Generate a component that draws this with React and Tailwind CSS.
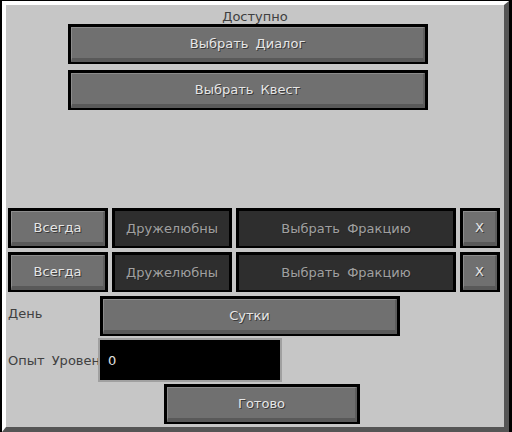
import React from "react";

const font = { fontFamily: '"DejaVu Sans", "Noto Sans", sans-serif' };

function Btn({ className = "", children, dark = false }) {
  if (dark) {
    return (
      <div className={`h-[40px] border-[3px] border-b-[2px] border-black bg-[#2e2e2e] flex items-center justify-center ${className}`}>
        <span className="text-[13px] leading-[14px] pt-[1px] text-[#a0a0a0] [text-shadow:1px_1px_0_#262626] whitespace-nowrap">
          {children}
        </span>
      </div>
    );
  }
  return (
    <div className={`h-[40px] border-[3px] border-b-[2px] border-black ${className}`}>
      <div className="h-full border-t border-l border-[#8c8c8c] border-b-[4px] border-r-[2px] border-b-[#595959] border-r-[#5e5e5e] bg-[#707070] flex items-center justify-center">
        <span className="text-[13px] leading-[14px] pt-[2px] text-[#e6e6e6] [text-shadow:1px_1px_0_#3a3a3a] whitespace-nowrap">
          {children}
        </span>
      </div>
    </div>
  );
}

export default function App() {
  return (
    <div className="w-[512px] h-[432px] overflow-hidden bg-black pl-[2px] pt-[1px] pr-[3px] [word-spacing:3px]" style={font}>
      <div className="h-[431px] border-l-4 border-t-4 border-white border-r-[5px] border-b-[5px] border-r-[#555555] border-b-[#555555] bg-[#c6c6c6] flex flex-col">
        <div className="h-[19px] pt-[5px] text-center text-[13px] leading-[14px] text-[#404040]">Доступно</div>
        <Btn className="ml-[62px] w-[360px]">Выбрать Диалог</Btn>
        <Btn className="ml-[62px] w-[360px] mt-[6px]">Выбрать Квест</Btn>

        <div className="mt-[98px] ml-[2px] flex gap-[4px]">
          <Btn className="w-[100px]">Всегда</Btn>
          <Btn dark className="w-[120px]">Дружелюбны</Btn>
          <Btn dark className="w-[220px]">Выбрать Фракцию</Btn>
          <Btn className="w-[40px]">X</Btn>
        </div>
        <div className="mt-[4px] ml-[2px] flex gap-[4px]">
          <Btn className="w-[100px]">Всегда</Btn>
          <Btn dark className="w-[120px]">Дружелюбны</Btn>
          <Btn dark className="w-[220px]">Выбрать Фракцию</Btn>
          <Btn className="w-[40px]">X</Btn>
        </div>

        <div className="mt-[4px] ml-[2px] flex items-center">
          <div className="w-[92px] text-[13px] leading-[14px] text-[#404040] -mt-[4px]">День</div>
          <Btn className="w-[300px]">Сутки</Btn>
        </div>

        <div className="mt-[2px] ml-[2px] flex items-center">
          <div className="w-[90px] whitespace-nowrap text-[13px] leading-[14px] text-[#404040] pt-[2px]">Опыт Уровень</div>
          <div className="relative w-[184px] h-[44px] border-2 border-[#a0a0a0] bg-black flex items-center pl-[8px]">
            <span className="text-[13px] leading-[14px] pt-[2px] text-[#e0e0e0]">0</span>
          </div>
        </div>

        <Btn className="mt-[2px] ml-[158px] w-[196px]">Готово</Btn>
      </div>
    </div>
  );
}
